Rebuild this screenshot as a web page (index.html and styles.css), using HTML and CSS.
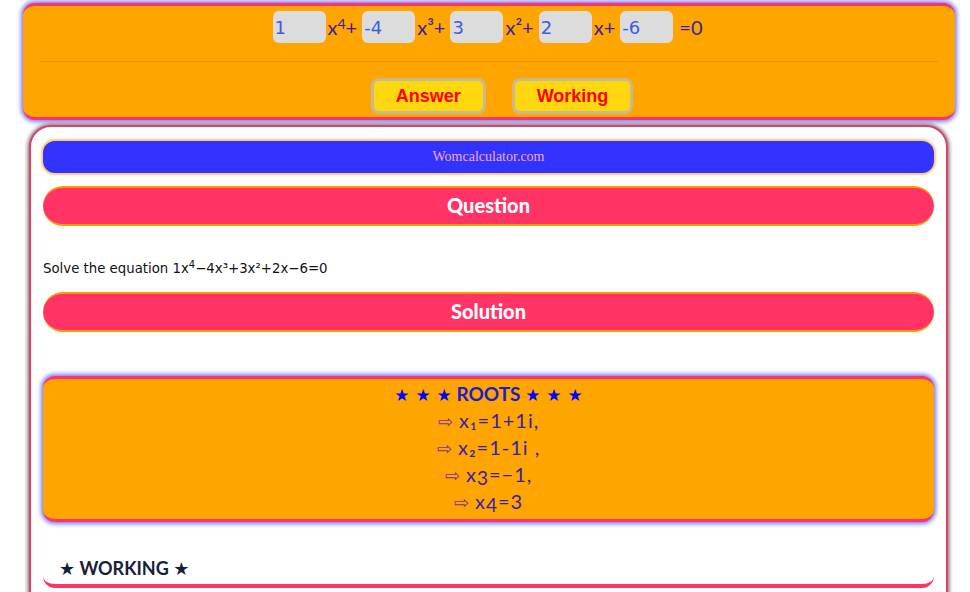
FILE: index.html
```html
<!DOCTYPE html>
<html>
<head>
<meta charset="utf-8">
<title>Quartic equation solver</title>
<link rel="stylesheet" href="styles.css">
</head>
<body>
<div class="calc">
  <div class="eq">
    <input class="coef" value="1"><span class="t">x<sup>4</sup>+</span>
    <input class="coef" value="-4"><span class="t">x³+</span>
    <input class="coef" value="3"><span class="t">x²+</span>
    <input class="coef" value="2"><span class="t">x+</span>
    <input class="coef" value="-6"><span class="t eqz">=0</span>
  </div>
  <div class="sep"></div>
  <div class="btns">
    <button class="btn">Answer</button>
    <button class="btn">Working</button>
  </div>
</div>
<div class="card">
  <div class="brand">Womcalculator.com</div>
  <div class="bar">Question</div>
  <p class="q">Solve the equation 1x<sup>4</sup>−4x³+3x²+2x−6=0</p>
  <div class="bar">Solution</div>
  <div class="roots">
    <div class="rt"><span class="st">★ ★ ★</span> ROOTS <span class="st">★ ★ ★</span></div>
    <div class="r"><span class="ar">⇨</span> x₁=1+1i,</div>
    <div class="r"><span class="ar">⇨</span> x₂=1-1i ,</div>
    <div class="r"><span class="ar">⇨</span> x<sub>3</sub>=−1,</div>
    <div class="r"><span class="ar">⇨</span> x<sub>4</sub>=3</div>
  </div>
  <div class="work">★ WORKING ★</div>
  <div class="rest"></div>
</div>
</body>
</html>
```
FILE: styles.css
```css
html { overflow: hidden; background: #fff; }
body {
  margin: 0;
  font-family: "Lato", "DejaVu Sans", sans-serif;
}
.calc {
  margin: 3px 15px 0 23px;
  background: #ffa500;
  border-top: 3px solid #f36;
  border-bottom: 3px solid #f36;
  border-radius: 12px;
  box-shadow: 0 0 4px 2px #7a7aff;
  padding: 5px 17px 3px;
}
.eq {
  display: flex;
  justify-content: center;
  align-items: center;
  gap: 2px;
  height: 32px;
}
.coef {
  width: 53px;
  height: 32px;
  box-sizing: border-box;
  border: none;
  border-radius: 6px;
  background: #dcdcdc;
  color: #3a5ee0;
  font: 18px "DejaVu Sans", sans-serif;
  padding: 0 2px;
  outline: none;
}
.t {
  color: #3c1fa8;
  font-size: 20px;
  line-height: 32px;
  padding-right: 3px;
}
.t sup { font-size: 14px; vertical-align: 6px; line-height: 0; }
.eqz { margin-left: 4px; }
.sep {
  height: 1px;
  background: #e69500;
  margin: 18px 0 16px;
}
.btns {
  display: flex;
  justify-content: center;
}
.btn {
  margin-left: 26px;
  height: 36px;
  padding: 0 22px;
  background: #ffd70f;
  border: 3px solid #c6bb90;
  border-radius: 8px;
  color: #f00;
  font: bold 18px "Liberation Sans", Arial, sans-serif;
}
.card {
  margin: 5px 22px 0 29px;
  background: #fff;
  border: 2px solid #e0406a;
  border-radius: 22px;
  box-shadow: 0 0 4px 1px #666;
  padding: 14px 12px 40px;
}
.brand {
  height: 32px;
  background: #33f;
  border-radius: 12px;
  box-shadow: 0 0 2px 2px #fdc77a;
  color: #f4a6d6;
  font: 14px "Liberation Serif", serif;
  line-height: 31px;
  text-align: center;
}
.bar {
  margin-top: 13px;
  height: 40px;
  box-sizing: border-box;
  background: #f36;
  border-top: 2px solid #f90;
  border-bottom: 2px solid #f90;
  border-radius: 20px;
  color: #fff;
  font-weight: 900;
  font-size: 20px;
  line-height: 34px;
  text-align: center;
}
.q {
  margin: 33px 0 13px;
  font: 13.3px/20px "DejaVu Sans", sans-serif;
  color: #111;
}
.q sup { font-size: 10px; vertical-align: 5px; line-height: 0; }
.roots {
  margin-top: 44px;
  background: #ffa500;
  border-top: 3px solid #f36;
  border-bottom: 3px solid #f36;
  border-radius: 12px;
  box-shadow: 0 0 4px 2px #7a7aff;
  padding: 1px 0 4px;
  text-align: center;
}
.rt {
  height: 27px;
  line-height: 27px;
  font-size: 19px;
  font-weight: bold;
  color: #1c1ccc;
}
.st { color: #00f; font-size: 17px; font-family: "DejaVu Sans", sans-serif; }
.r {
  height: 27px;
  line-height: 27px;
  font-size: 20px;
  letter-spacing: 1px;
  color: #3c1fa8;
}
.r sub { font-size: 19px; vertical-align: -3px; line-height: 0; }
.ar {
  font-family: "DejaVu Sans", sans-serif;
  font-size: 18px;
  color: #8a2aa0;
  letter-spacing: 0;
}
.work {
  margin-top: 34px;
  padding: 0 0 4px 16px;
  line-height: 24px;
  font-size: 18px;
  font-weight: bold;
  color: #14213a;
  border-bottom: 4px solid #f36;
  border-radius: 0 0 12px 12px;
}
.rest { height: 40px; }
```
